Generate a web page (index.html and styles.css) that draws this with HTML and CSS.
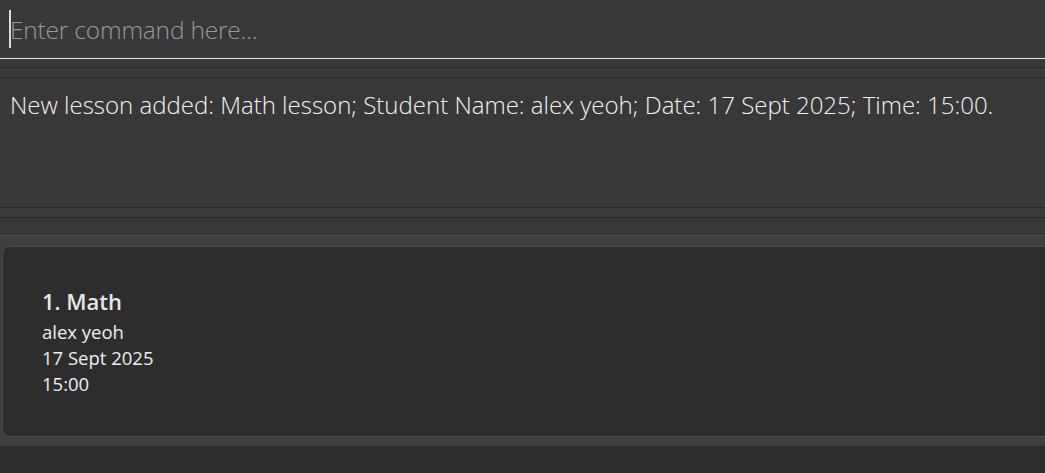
FILE: index.html
```html
<!DOCTYPE html>
<html>
<head>
<meta charset="utf-8">
<link rel="stylesheet" href="styles.css">
</head>
<body>
<div class="app">
  <div class="command">
    <span class="caret"></span>
    <span class="placeholder">Enter command here...</span>
  </div>
  <div class="divider divider-top"></div>
  <div class="result">
    <p class="result-text">New lesson added: Math lesson; Student Name: alex yeoh; Date: 17 Sept 2025; Time: 15:00.</p>
  </div>
  <div class="divider divider-mid"></div>
  <div class="list-gap"></div>
  <div class="list">
    <div class="list-inner">
      <div class="card">
        <div class="card-title">1. Math</div>
        <div class="card-line">alex yeoh</div>
        <div class="card-line">17 Sept 2025</div>
        <div class="card-line">15:00</div>
      </div>
    </div>
  </div>
</div>
</body>
</html>
```
FILE: styles.css
```css
html, body {
  margin: 0;
  padding: 0;
}
body {
  background: #2d2d2d;
  font-family: "Open Sans", "Noto Sans", sans-serif;
  overflow: hidden;
}
.app {
  width: 1045px;
  height: 473px;
  display: flex;
  flex-direction: column;
}
.command {
  height: 59px;
  background: #383838;
  border-bottom: 1px solid #e6e6e6;
  display: flex;
  align-items: center;
  padding-left: 9px;
  box-sizing: border-box;
}
.caret {
  width: 2px;
  height: 38px;
  background: #dcdcdc;
  margin-top: -1px;
}
.placeholder {
  color: #8f9ba3;
  font-weight: 300;
  font-size: 24.5px;
  margin-left: -1px;
  margin-top: 0;
  letter-spacing: -0.2px;
}
.divider {
  background: #393939;
  box-sizing: border-box;
}
.divider-top {
  height: 19px;
  border-top: 8px solid #383838;
  border-bottom: 1px solid #2c2c2c;
  box-shadow: inset 0 1px 0 #2c2c2c;
}
.result {
  height: 129px;
  background: #383838;
  padding: 10px 10px 0;
  box-sizing: border-box;
}
.result-text {
  margin: 0;
  color: #f2f2f2;
  font-size: 24px;
  font-weight: 300;
  white-space: nowrap;
}
.divider-mid {
  height: 11px;
  border-top: 1px solid #2c2c2c;
  border-bottom: 1px solid #2c2c2c;
}
.list-gap {
  height: 17px;
  background: #383838;
}
.list {
  flex: 1;
  background: #2d2d2d;
}
.list-inner {
  background: #3c3e40;
  border-top: 1px solid #4b4b4b;
  padding: 10px 0 9px 2px;
  overflow: hidden;
}
.card {
  width: 1100px;
  height: 191px;
  box-sizing: border-box;
  background: #2d2d2d;
  border: 1px solid #4a4a4a;
  border-radius: 8px 0 0 8px;
  padding: 40px 0 0 39px;
  color: #f0f0f0;
}
.card-title {
  font-size: 22px;
  font-weight: 600;
  color: #e6e6e6;
  line-height: 28px;
  margin-bottom: 4px;
}
.card-line {
  font-size: 18.5px;
  line-height: 26px;
  color: #eeeeee;
}
```
